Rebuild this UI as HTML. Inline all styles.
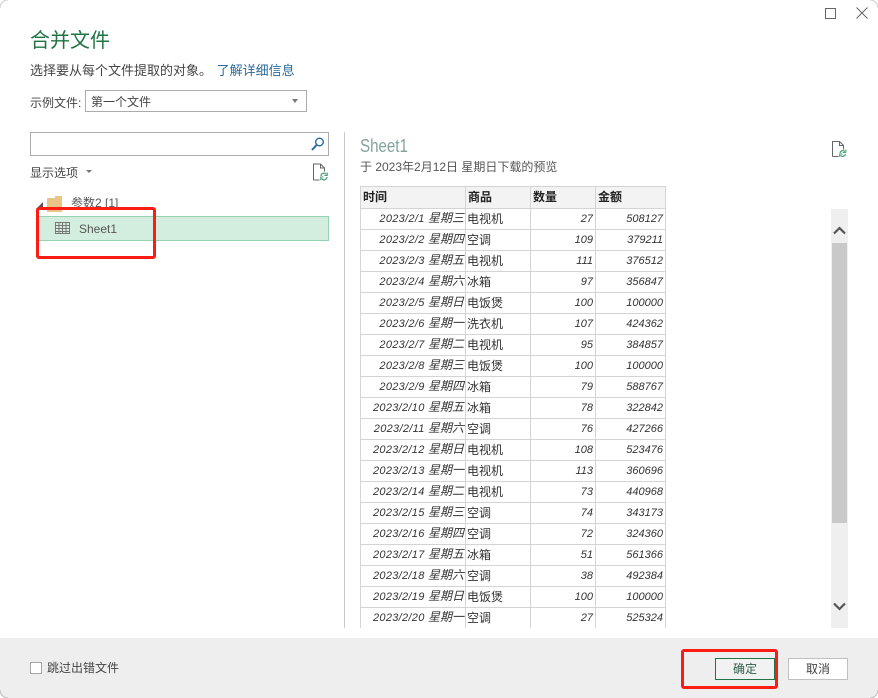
<!DOCTYPE html>
<html><head><meta charset="utf-8">
<style>
html,body{margin:0;padding:0;background:#fff}
body{width:878px;height:698px;position:relative;overflow:hidden;font-family:"Liberation Sans","Noto Sans CJK SC",sans-serif;font-size:12px;color:#444}
.a{position:absolute;white-space:nowrap;line-height:1}
table{position:absolute;left:360px;top:186px;border-collapse:collapse;table-layout:fixed;width:305px;color:#333}
td,th{border:1px solid #d4d4d4;height:20px;padding:0;overflow:hidden;white-space:nowrap;font-size:12px;line-height:15px}
th{background:#f3f3f3;height:21px;text-align:left;padding-left:2px;font-size:12px;color:#222}
td.d{text-align:right;font-style:italic;padding-right:1px;font-size:11px;letter-spacing:.3px}
td.d b{font-weight:normal;font-size:12px;letter-spacing:0;line-height:12px}
td.t{padding-left:1px;font-size:12px}
td.n{text-align:right;font-style:italic;padding-right:2px;font-size:11px}
#clip{position:absolute;left:0;top:0;width:878px;height:628px;overflow:hidden}
</style></head><body>
<div class="a" style="left:30px;top:31px;font-size:20px;color:#217346">合并文件</div>
<div class="a" style="left:30px;top:64px;font-size:13px;color:#444">选择要从每个文件提取的对象。 <span style="color:#2b6a9b;margin-left:1px">了解详细信息</span></div>
<div class="a" style="left:30px;top:97px;font-size:12px">示例文件:</div>
<div class="a" style="left:85px;top:90px;width:220px;height:20px;border:1px solid #ababab;background:#fff"></div>
<div class="a" style="left:91px;top:96px;font-size:12px;color:#444">第一个文件</div>
<div class="a" style="left:292px;top:99px;width:0;height:0;border-left:3.5px solid transparent;border-right:3.5px solid transparent;border-top:4px solid #777"></div>

<div class="a" style="left:30px;top:132px;width:297px;height:22px;border:1px solid #ababab;background:#fff"></div>
<svg class="a" style="left:310px;top:136px" width="16" height="16" viewBox="0 0 16 16"><circle cx="9.500" cy="6" r="3.800" fill="none" stroke="#2b6a9b" stroke-width="1.400"/><path d="M6.500 9 L2 14" stroke="#2b6a9b" stroke-width="2"/></svg>
<div class="a" style="left:30px;top:167px;font-size:12px">显示选项</div>
<div class="a" style="left:86px;top:170px;width:0;height:0;border-left:3px solid transparent;border-right:3px solid transparent;border-top:3.5px solid #777"></div>
<svg class="a" style="left:312px;top:163px" width="17" height="18" viewBox="0 0 17 18"><path d="M1.500 17 H7.500 M1.500 17 V1 H8.500 L12.500 5 V8.500 M8.500 1 V5 H12.500" fill="none" stroke="#666" stroke-width="1"/><path d="M9 13 A3 3 0 0 1 14.500 11.500 M15 14 A3 3 0 0 1 9.500 15.500" fill="none" stroke="#4aa37a" stroke-width="1.300"/><path d="M15.300 9.500 V12.500 H12.300 M8.700 17 V14 H11.500" fill="none" stroke="#4aa37a" stroke-width="1"/></svg>

<div class="a" style="left:36px;top:202px;width:0;height:0;border-bottom:7px solid #555;border-left:7px solid transparent"></div>
<svg class="a" style="left:47px;top:196px" width="16" height="16" viewBox="0 0 16 16"><path d="M0 3 Q0 2 1 2 H8 V1 Q8 0 9 0 H15 V16 H0 Z" fill="#e8c587"/></svg>
<div class="a" style="left:71px;top:197px;font-size:12px;color:#555">参数2 [1]</div>
<div class="a" style="left:38px;top:216px;width:289px;height:23px;background:#d3eedf;border:1px solid #95d3b0"></div>
<svg class="a" style="left:54px;top:221px" width="17" height="15" viewBox="0 0 17 15"><path d="M1.500 1.500 H15.500 V12.500 H1.500 Z M1.500 4.500 H15.500 M1.500 7.500 H15.500 M1.500 10.500 H15.500 M5 1.500 V12.500 M8.500 1.500 V12.500 M12 1.500 V12.500" fill="none" stroke="#777" stroke-width="1"/></svg>
<div class="a" style="left:79px;top:223px;font-size:12px;color:#555">Sheet1</div>

<div class="a" style="left:344px;top:132px;width:1px;height:496px;background:#c8c8c8"></div>
<div class="a" style="left:360px;top:137px;font-size:18px;color:#84a29c;transform:scaleX(.84);transform-origin:left center">Sheet1</div>
<div class="a" style="left:360px;top:161px;font-size:12px;color:#555">于 2023年2月12日 星期日下载的预览</div>
<svg class="a" style="left:831px;top:141px" width="17" height="18" viewBox="0 0 17 18"><path d="M1.500 15.500 H7.500 M1.500 15.500 V0.500 H8.500 L12.500 4.500 V8.500 M8.500 0.500 V4.500 H12.500" fill="none" stroke="#666" stroke-width="1"/><path d="M9 12 A3 3 0 0 1 14 10.500 M14.500 13 A3 3 0 0 1 9.500 14.500" fill="none" stroke="#4aa37a" stroke-width="1.300"/><path d="M14.800 8.500 V11.500 H11.800 M8.700 16 V13 H11.500" fill="none" stroke="#4aa37a" stroke-width="1"/></svg>

<div id="clip">
<table>
<colgroup><col style="width:105px"><col style="width:65px"><col style="width:65px"><col style="width:70px"></colgroup>
<tr><th>时间</th><th>商品</th><th>数量</th><th>金额</th></tr>
<tr><td class="d">2023/2/1 <b>星期三</b></td><td class="t">电视机</td><td class="n">27</td><td class="n">508127</td></tr>
<tr><td class="d">2023/2/2 <b>星期四</b></td><td class="t">空调</td><td class="n">109</td><td class="n">379211</td></tr>
<tr><td class="d">2023/2/3 <b>星期五</b></td><td class="t">电视机</td><td class="n">111</td><td class="n">376512</td></tr>
<tr><td class="d">2023/2/4 <b>星期六</b></td><td class="t">冰箱</td><td class="n">97</td><td class="n">356847</td></tr>
<tr><td class="d">2023/2/5 <b>星期日</b></td><td class="t">电饭煲</td><td class="n">100</td><td class="n">100000</td></tr>
<tr><td class="d">2023/2/6 <b>星期一</b></td><td class="t">洗衣机</td><td class="n">107</td><td class="n">424362</td></tr>
<tr><td class="d">2023/2/7 <b>星期二</b></td><td class="t">电视机</td><td class="n">95</td><td class="n">384857</td></tr>
<tr><td class="d">2023/2/8 <b>星期三</b></td><td class="t">电饭煲</td><td class="n">100</td><td class="n">100000</td></tr>
<tr><td class="d">2023/2/9 <b>星期四</b></td><td class="t">冰箱</td><td class="n">79</td><td class="n">588767</td></tr>
<tr><td class="d">2023/2/10 <b>星期五</b></td><td class="t">冰箱</td><td class="n">78</td><td class="n">322842</td></tr>
<tr><td class="d">2023/2/11 <b>星期六</b></td><td class="t">空调</td><td class="n">76</td><td class="n">427266</td></tr>
<tr><td class="d">2023/2/12 <b>星期日</b></td><td class="t">电视机</td><td class="n">108</td><td class="n">523476</td></tr>
<tr><td class="d">2023/2/13 <b>星期一</b></td><td class="t">电视机</td><td class="n">113</td><td class="n">360696</td></tr>
<tr><td class="d">2023/2/14 <b>星期二</b></td><td class="t">电视机</td><td class="n">73</td><td class="n">440968</td></tr>
<tr><td class="d">2023/2/15 <b>星期三</b></td><td class="t">空调</td><td class="n">74</td><td class="n">343173</td></tr>
<tr><td class="d">2023/2/16 <b>星期四</b></td><td class="t">空调</td><td class="n">72</td><td class="n">324360</td></tr>
<tr><td class="d">2023/2/17 <b>星期五</b></td><td class="t">冰箱</td><td class="n">51</td><td class="n">561366</td></tr>
<tr><td class="d">2023/2/18 <b>星期六</b></td><td class="t">空调</td><td class="n">38</td><td class="n">492384</td></tr>
<tr><td class="d">2023/2/19 <b>星期日</b></td><td class="t">电饭煲</td><td class="n">100</td><td class="n">100000</td></tr>
<tr><td class="d">2023/2/20 <b>星期一</b></td><td class="t">空调</td><td class="n">27</td><td class="n">525324</td></tr>
</table>
</div>

<div class="a" style="left:831px;top:209px;width:17px;height:419px;background:#efefef"></div>
<div class="a" style="left:832px;top:243px;width:15px;height:280px;background:#c9c9c9"></div>
<svg class="a" style="left:833px;top:225px" width="13" height="10" viewBox="0 0 13 10"><path d="M1 8.500 L6.500 3 L12 8.500" fill="none" stroke="#555" stroke-width="2.200"/></svg>
<svg class="a" style="left:833px;top:601px" width="13" height="10" viewBox="0 0 13 10"><path d="M1 2.500 L6.500 8 L12 2.500" fill="none" stroke="#555" stroke-width="2.200"/></svg>

<div class="a" style="left:825px;top:8px;width:9px;height:9px;border:1px solid #666"></div>
<svg class="a" style="left:856px;top:7px" width="12" height="12" viewBox="0 0 12 12"><path d="M0.500 0.500 L11.500 11.500 M11.500 0.500 L0.500 11.500" stroke="#666" stroke-width="1"/></svg>

<div class="a" style="left:0;top:638px;width:878px;height:60px;background:#eeeeee"></div>
<div class="a" style="left:30px;top:662px;width:10px;height:10px;border:1px solid #a8a8a8;background:#fff"></div>
<div class="a" style="left:47px;top:662px;font-size:12px;color:#444">跳过出错文件</div>
<div class="a" style="left:715px;top:658px;width:58px;height:20px;border:1px solid #217346;background:#f2f2f2;color:#2f5f48;text-align:center;line-height:20px;font-size:12px">确定</div>
<div class="a" style="left:788px;top:658px;width:58px;height:20px;border:1px solid #c0c0c0;background:#fff;color:#444;text-align:center;line-height:20px;font-size:12px">取消</div>

<svg class="a" style="left:0;top:690px" width="8" height="8" viewBox="0 0 8 8"><path d="M0 0 A8 8 0 0 0 8 8 H0 Z" fill="#fff"/><path d="M0 0 A8 8 0 0 0 8 8" fill="none" stroke="#bbb"/></svg>
<svg class="a" style="left:870px;top:690px" width="8" height="8" viewBox="0 0 8 8"><path d="M8 0 A8 8 0 0 1 0 8 H8 Z" fill="#fff"/><path d="M8 0 A8 8 0 0 1 0 8" fill="none" stroke="#bbb"/></svg>
<svg class="a" style="left:0;top:0" width="8" height="8" viewBox="0 0 8 8"><path d="M0 8 A8 8 0 0 1 8 0" fill="none" stroke="#ccc"/></svg>
<svg class="a" style="left:870px;top:0" width="8" height="8" viewBox="0 0 8 8"><path d="M8 8 A8 8 0 0 0 0 0" fill="none" stroke="#ccc"/></svg>

<div class="a" style="left:36px;top:207px;width:114px;height:46px;border:3px solid #fb1d13;border-radius:3px"></div>
<div class="a" style="left:681px;top:649px;width:91px;height:34px;border:3px solid #fb1d13;border-radius:3px"></div>
</body></html>
